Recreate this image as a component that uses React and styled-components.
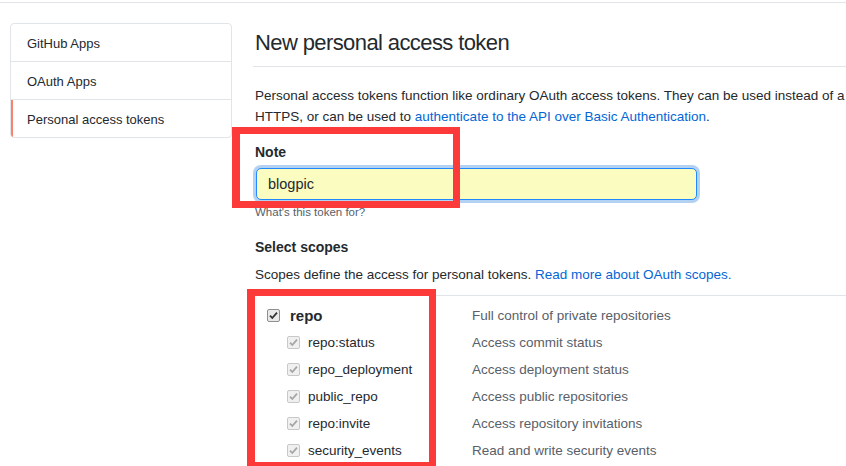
import React from "react";
import styled, { createGlobalStyle } from "styled-components";

/*CSS*/
const Global = createGlobalStyle`
    html, body {
        margin: 0;
        padding: 0;
        background: #fff;
        overflow: hidden;
    }
    body {
        font-family: "Liberation Sans", Arial, sans-serif;
        font-size: 13.5px;
        color: #24292e;
    }
`;

const Screen = styled.div`
    position: relative;
    width: 846px;
    height: 466px;
    overflow: hidden;
`;

const TopRule = styled.div`
    margin-top: 2px;
    height: 1px;
    background: #e1e4e8;
`;

const Layout = styled.div`
    display: flex;
    padding: 20px 0 0 10px;
`;

const Sidebar = styled.nav`
    flex: 0 0 220px;
    align-self: flex-start;
    border: 1px solid #e1e4e8;
    border-radius: 4px;
    overflow: hidden;
`;

const NavItem = styled.div`
    position: relative;
    padding: 9px 16px 7px;
    line-height: 21px;
    font-size: 13px;
    color: #24292e;
    border-bottom: ${p => (p.$last ? "none" : "1px solid #e1e4e8")};

    &::before {
        content: "";
        display: ${p => (p.$active ? "block" : "none")};
        position: absolute;
        left: 0;
        top: 0;
        bottom: 0;
        width: 2px;
        background: #f9826c;
    }
`;

const Main = styled.main`
    flex: 1;
    min-width: 0;
    margin-left: 23px;
`;

const Title = styled.h1`
    margin: 5px 0 0 -2px;
    padding: 0 0 8px 2px;
    font-size: 22px;
    letter-spacing: -0.6px;
    line-height: 30px;
    font-weight: 400;
    border-bottom: 1px solid #e1e4e8;
    white-space: nowrap;
`;

const Intro = styled.p`
    margin: 18px 0 0;
    line-height: 21px;
    white-space: nowrap;
`;

const Link = styled.a`
    color: #0366d6;
    text-decoration: none;
`;

const Label = styled.div`
    margin-top: ${p => p.$top || 0}px;
    font-weight: 700;
    font-size: 14px;
    line-height: 21px;
`;

const TextInput = styled.input`
    display: block;
    box-sizing: border-box;
    margin: 5px 0 0 1px;
    width: 441px;
    height: 32px;
    padding: 0 11px;
    font-family: inherit;
    font-size: 14.5px;
    color: #24292e;
    background: #fafcc0;
    border: 1px solid #2188ff;
    border-radius: 5px;
    box-shadow: 0 0 0 3px rgba(3, 102, 214, 0.3);
    outline: none;
`;

const Hint = styled.div`
    margin-top: 3px;
    font-size: 11.5px;
    line-height: 18px;
    color: #586069;
`;

const Note = styled.div`
    margin-top: 6px;
    line-height: 21px;
    white-space: nowrap;
`;

const ScopeTable = styled.div`
    margin-top: 10px;
    padding-top: 6px;
    border-top: 1px solid #e1e4e8;
`;

const ScopeRow = styled.div`
    display: grid;
    grid-template-columns: 217px 1fr;
    align-items: center;
    height: 27px;
    white-space: nowrap;
`;

const ScopeName = styled.div`
    display: flex;
    align-items: center;
    gap: ${p => (p.$child ? 8 : 10)}px;
    padding-left: ${p => (p.$child ? 32 : 12)}px;
    font-weight: ${p => (p.$child ? 400 : 700)};
    font-size: ${p => (p.$child ? 13.5 : 15)}px;
`;

const ScopeDesc = styled.div`
    color: #586069;
`;

const Box = styled.span`
    display: inline-flex;
    align-items: center;
    justify-content: center;
    box-sizing: border-box;
    width: 13px;
    height: 13px;
    border: 1px solid ${p => (p.$disabled ? "#c8c8c8" : "#8f8f8f")};
    border-radius: 2px;
    background: ${p => (p.$disabled ? "#f0f0f0" : "#e9e9e9")};
`;

const Marker = styled.div`
    position: absolute;
    left: ${p => p.$x}px;
    top: ${p => p.$y}px;
    width: ${p => p.$w}px;
    height: ${p => p.$h}px;
    box-sizing: border-box;
    border: 7px solid #fc3a3a;
    border-left-width: 8px;
    pointer-events: none;
`;

function Check({ disabled }) {
    return (
        <Box $disabled={disabled}>
            <svg width="11" height="11" viewBox="0 0 11 11">
                <path
                    d="M2 5.6 L4.3 8 L9 2.6"
                    fill="none"
                    stroke={disabled ? "#a6a6a6" : "#333"}
                    strokeWidth="1.8"
                />
            </svg>
        </Box>
    );
}

const scopes = [
    ["repo:status", "Access commit status"],
    ["repo_deployment", "Access deployment status"],
    ["public_repo", "Access public repositories"],
    ["repo:invite", "Access repository invitations"],
    ["security_events", "Read and write security events"],
];

export default function App() {
    return (
        <Screen>
            <Global />
            <TopRule />
            <Layout>
                <Sidebar>
                    <NavItem>GitHub Apps</NavItem>
                    <NavItem>OAuth Apps</NavItem>
                    <NavItem $active $last>Personal access tokens</NavItem>
                </Sidebar>
                <Main>
                    <Title>New personal access token</Title>
                    <Intro>
                        Personal access tokens function like ordinary OAuth access tokens. They can be used instead of a password for Git over
                        <br />
                        HTTPS, or can be used to <Link>authenticate to the API over Basic Authentication</Link>.
                    </Intro>
                    <Label $top={15}>Note</Label>
                    <TextInput defaultValue="blogpic" />
                    <Hint>What's this token for?</Hint>
                    <Label $top={16}>Select scopes</Label>
                    <Note>
                        Scopes define the access for personal tokens. <Link>Read more about OAuth scopes.</Link>
                    </Note>
                    <ScopeTable>
                        <ScopeRow>
                            <ScopeName>
                                <Check />
                                repo
                            </ScopeName>
                            <ScopeDesc>Full control of private repositories</ScopeDesc>
                        </ScopeRow>
                        {scopes.map(([name, desc]) => (
                            <ScopeRow key={name}>
                                <ScopeName $child>
                                    <Check disabled />
                                    {name}
                                </ScopeName>
                                <ScopeDesc>{desc}</ScopeDesc>
                            </ScopeRow>
                        ))}
                    </ScopeTable>
                </Main>
            </Layout>
            <Marker $x={232} $y={127} $w={228} $h={81} />
            <Marker $x={247} $y={289} $w={189} $h={180} />
        </Screen>
    );
}
